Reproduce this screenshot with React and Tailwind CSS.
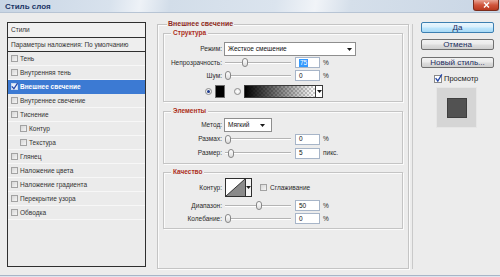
import React from "react";

function Check({ checked, className }) {
  return (
    <span
      className={
        "flex shrink-0 items-center justify-center border border-[#a2a2a2] bg-[linear-gradient(135deg,#d6d6d6,#f5f5f5)] " +
        (className || "w-[7px] h-[7px]")
      }
    >
      {checked && (
        <svg width="7" height="7" viewBox="0 0 7 7" className="overflow-visible">
          <path d="M0.8 3.4 L2.9 5.8 L6.6 0.2" stroke="#2346a8" strokeWidth="1.3" fill="none" />
        </svg>
      )}
    </span>
  );
}

function Radio({ on, className }) {
  return (
    <span
      className={
        "flex h-[7px] w-[7px] shrink-0 items-center justify-center rounded-full border border-[#8d8d8d] bg-[radial-gradient(circle,#ffffff,#e2e2e2)] " +
        (className || "")
      }
    >
      {on && <span className="h-[3px] w-[3px] rounded-full bg-[#1d3a8c]" />}
    </span>
  );
}

function Arrow() {
  return (
    <svg width="5" height="3" viewBox="0 0 5 3" className="shrink-0">
      <path d="M0 0H5L2.5 3Z" fill="#1a1a1a" />
    </svg>
  );
}

function Slider({ pos }) {
  return (
    <div className="relative ml-[3px] flex h-[11px] w-[66px] shrink-0 items-center">
      <div className="h-[2px] w-full border-b border-white bg-[#b4b4b4]" />
      <span
        className="absolute top-[1px] h-[9px] w-[6px] rounded-[3px] border border-[#878787] bg-[linear-gradient(#ffffff,#dcdcdc)]"
        style={{ left: pos }}
      />
    </div>
  );
}

function Field({ value, selected }) {
  return (
    <div className="ml-[4px] flex h-[11px] w-[25px] shrink-0 items-center border border-[#a7b5c8] bg-white pl-[3px] text-[6.5px] leading-[8px] text-[#111]">
      {selected ? <span className="bg-[#3399ff] px-[1px] text-white">{value}</span> : value}
    </div>
  );
}

function Label({ children }) {
  return (
    <span className="w-[58px] shrink-0 text-right text-[6.5px] leading-[8px] text-[#2a2a2a]">{children}</span>
  );
}

function SliderRow({ label, pos, value, unit, selected, h }) {
  return (
    <div className={"flex items-center " + h}>
      <Label>{label}</Label>
      <Slider pos={pos} />
      <Field value={value} selected={selected} />
      <span className="ml-[3px] text-[6.5px] leading-[8px] text-[#2a2a2a]">{unit}</span>
    </div>
  );
}

function Group({ title, className, children }) {
  return (
    <div
      className={
        "relative flex w-[240px] shrink-0 flex-col border border-[#c4c4c4] shadow-[inset_1px_1px_0_#fbfbfb,1px_1px_0_#fbfbfb] " +
        className
      }
    >
      <span className="absolute -top-[5px] left-[7px] bg-[#ececec] px-[2px] text-[6.5px] font-bold leading-[8px] text-[#ad2f1b]">
        {title}
      </span>
      {children}
    </div>
  );
}

function Btn({ primary, className, children }) {
  return (
    <div
      className={
        "flex h-[11px] w-[73px] items-center justify-center rounded-[2px] border text-[8px] leading-[9px] text-[#1b2b5c] " +
        (primary
          ? "border-[#3c7fb1] bg-[linear-gradient(#eaf6fd,#d9effc_45%,#bee6fd_55%,#a7d9f5)] "
          : "border-[#707070] bg-[linear-gradient(#f2f2f2,#ebebeb_45%,#dddddd_55%,#cfcfcf)] ") +
        (className || "")
      }
    >
      {children}
    </div>
  );
}

const items = [
  { t: "Тень" },
  { t: "Внутренняя тень" },
  { t: "Внешнее свечение", active: true },
  { t: "Внутреннее свечение" },
  { t: "Тиснение" },
  { t: "Контур", indent: true },
  { t: "Текстура", indent: true },
  { t: "Глянец" },
  { t: "Наложение цвета" },
  { t: "Наложение градиента" },
  { t: "Перекрытие узора" },
  { t: "Обводка" },
];

export default function App() {
  return (
    <div className="flex h-[277px] w-[500px] flex-col overflow-hidden bg-[#ececec] font-['Liberation_Sans',Arial,sans-serif] text-[#222]">
      {/* title bar */}
      <div className="flex h-[13px] shrink-0 items-start justify-between border-b border-[#b7c4d4] bg-[linear-gradient(100deg,#c8d5e4_0%,#d8e2ed_22%,#eef2f7_28%,#d2dde9_34%,#dbe4ee_55%,#f1f4f8_63%,#d5dfea_70%,#c9d6e5_100%)]">
        <span className="ml-[5px] mt-[2px] text-[8px] font-bold leading-[9px] text-[#1b3566]">Стиль слоя</span>
        <div className="mr-[1px] flex h-[11px] w-[26px] items-center justify-center rounded-b-[3px] border border-t-0 border-[#7b2c1c] bg-[linear-gradient(#e8a494,#d0553c_50%,#b8391f)]">
          <svg width="7" height="6" viewBox="0 0 7 6">
            <path d="M1 0.5 L6 5.5 M6 0.5 L1 5.5" stroke="#fff" strokeWidth="1.4" />
          </svg>
        </div>
      </div>

      {/* body */}
      <div className="flex h-[262px] shrink-0 items-start">
        {/* left list */}
        <div className="ml-[7px] mt-[9px] flex h-[245px] w-[139px] shrink-0 flex-col border border-[#2f2f2f] bg-[#ebebeb]">
          <div className="flex h-[15px] shrink-0 items-center border-b border-[#2f2f2f] bg-[#f1f1f1] pl-[3px] text-[6.5px] leading-[8px] text-[#333]">
            Стили
          </div>
          <div className="flex h-[14px] shrink-0 items-center border-b border-[#2f2f2f] bg-[#eeeeee] pl-[3px] text-[6.5px] leading-[8px] text-[#333]">
            Параметры наложения: По умолчанию
          </div>
          {items.map((it) => (
            <div
              key={it.t}
              className={
                "flex h-[14px] shrink-0 items-center border-b " +
                (it.active ? "border-[#3c7ad3] bg-[#3c7ad3] " : "border-[#f7f7f7] ") +
                (it.indent ? "pl-[12px]" : "pl-[3px]")
              }
            >
              {it.active ? (
                <span className="flex h-[7px] w-[7px] shrink-0 items-center justify-center border border-[#c9d8ef] bg-[#e9f0fb]">
                  <svg width="7" height="7" viewBox="0 0 7 7" className="overflow-visible">
                    <path d="M0.8 3.4 L2.9 5.8 L6.6 0.2" stroke="#2346a8" strokeWidth="1.3" fill="none" />
                  </svg>
                </span>
              ) : (
                <Check />
              )}
              <span
                className={
                  "ml-[2px] text-[6.5px] leading-[8px] " + (it.active ? "font-bold text-white" : "text-[#333]")
                }
              >
                {it.t}
              </span>
            </div>
          ))}
        </div>

        {/* middle */}
        <div className="ml-[11px] mt-[11px] flex shrink-0">
          <div className="relative flex h-[245px] w-[252px] flex-col border border-[#c4c4c4] px-[5px] pt-[8px] shadow-[inset_1px_1px_0_#fbfbfb,1px_1px_0_#fbfbfb]">
            <span className="absolute -top-[5px] left-[9px] bg-[#ececec] px-[1px] text-[7px] font-bold leading-[8px] text-[#8c2a1b]">
              Внешнее свечение
            </span>

            <Group title="Структура" className="h-[69px] pt-[8px]">
              <div className="flex h-[14px] items-center">
                <Label>Режим:</Label>
                <div className="ml-[2px] flex h-[14px] w-[132px] items-center border border-[#8e8e8e] bg-white px-[3px]">
                  <span className="flex-1 text-[6.5px] leading-[8px] text-[#111]">Жесткое смешение</span>
                  <Arrow />
                </div>
              </div>
              <SliderRow h="h-[13px]" label="Непрозрачность:" pos={17} value="75" unit="%" selected />
              <SliderRow h="h-[13px]" label="Шум:" pos={0} value="0" unit="%" />
              <div className="mt-[3px] flex h-[13px] items-center pl-[41px]">
                <Radio on />
                <span className="ml-[3px] h-[13px] w-[10px] shrink-0 border border-[#6e6e6e] bg-black" />
                <Radio className="ml-[9px]" />
                <div className="ml-[3px] flex h-[13px] w-[79px] shrink-0 border border-[#3a3a3a]">
                  <div className="flex-1 bg-[linear-gradient(to_right,#000000,rgba(0,0,0,0.15)_85%,rgba(0,0,0,0)),repeating-conic-gradient(#cfcfcf_0%_25%,#ffffff_0%_50%)] bg-[length:100%_100%,4px_4px]" />
                  <div className="flex w-[7px] items-center justify-center border-l border-[#3a3a3a] bg-white">
                    <Arrow />
                  </div>
                </div>
              </div>
            </Group>

            <Group title="Элементы" className="mt-[9px] h-[53px] pt-[6px]">
              <div className="flex h-[14px] items-center">
                <Label>Метод:</Label>
                <div className="ml-[2px] flex h-[14px] w-[48px] items-center border border-[#8e8e8e] bg-white pl-[3px] pr-[6px]">
                  <span className="flex-1 text-[6.5px] leading-[8px] text-[#111]">Мягкий</span>
                  <Arrow />
                </div>
              </div>
              <SliderRow h="h-[14px]" label="Размах:" pos={0} value="0" unit="%" />
              <SliderRow h="h-[14px]" label="Размер:" pos={3} value="5" unit="пикс." />
            </Group>

            <Group title="Качество" className="mt-[8px] h-[57px] pt-[5px]">
              <div className="flex h-[19px] items-center">
                <Label>Контур:</Label>
                <div className="ml-[3px] flex h-[19px] w-[27px] shrink-0 border border-[#2e2e2e] bg-white">
                  <svg width="19" height="17" viewBox="0 0 19 17" className="shrink-0">
                    <path d="M0 17 L19 0 L19 17 Z" fill="#8a8a8a" />
                    <path d="M0 17 L19 0" stroke="#111" strokeWidth="0.8" />
                  </svg>
                  <div className="flex flex-1 items-center justify-center border-l border-[#2e2e2e] bg-[#f4f4f4]">
                    <Arrow />
                  </div>
                </div>
                <Check className="ml-[8px] h-[7px] w-[7px]" />
                <span className="ml-[3px] text-[6.5px] leading-[8px] text-[#2a2a2a]">Сглаживание</span>
              </div>
              <div className="mt-[2px]" />
              <SliderRow h="h-[13px]" label="Диапазон:" pos={31} value="50" unit="%" />
              <SliderRow h="h-[13px]" label="Колебание:" pos={0} value="0" unit="%" />
            </Group>
          </div>
          <div className="ml-[3px] h-[245px] w-px bg-[#c9c9c9]" />
        </div>

        {/* right */}
        <div className="ml-[8px] mt-[9px] flex w-[73px] shrink-0 flex-col">
          <Btn primary>Да</Btn>
          <Btn className="mt-[6px]">Отмена</Btn>
          <Btn className="mt-[7px]">Новый стиль...</Btn>
          <div className="ml-[13px] mt-[6px] flex h-[9px] items-center">
            <span className="flex h-[8px] w-[8px] shrink-0 items-center justify-center border border-[#8a8a8a] bg-white">
              <svg width="7" height="7" viewBox="0 0 7 7" className="overflow-visible">
                <path d="M0.6 3.2 L2.8 6 L6.8 -0.6" stroke="#2346a8" strokeWidth="1.3" fill="none" />
              </svg>
            </span>
            <span className="ml-[2px] text-[7.5px] leading-[9px] text-[#222]">Просмотр</span>
          </div>
          <div className="ml-[15px] mt-[4px] flex h-[41px] w-[41px] items-center justify-center border border-[#e6e6e6] bg-[#d5d5d5]">
            <div className="h-[20px] w-[20px] border border-[#3e3e3e] bg-[#525252]" />
          </div>
        </div>
      </div>

      <div className="h-px shrink-0 bg-[#a8b5c7]" />
      <div className="h-px shrink-0 bg-[#dfe6ef]" />
    </div>
  );
}
